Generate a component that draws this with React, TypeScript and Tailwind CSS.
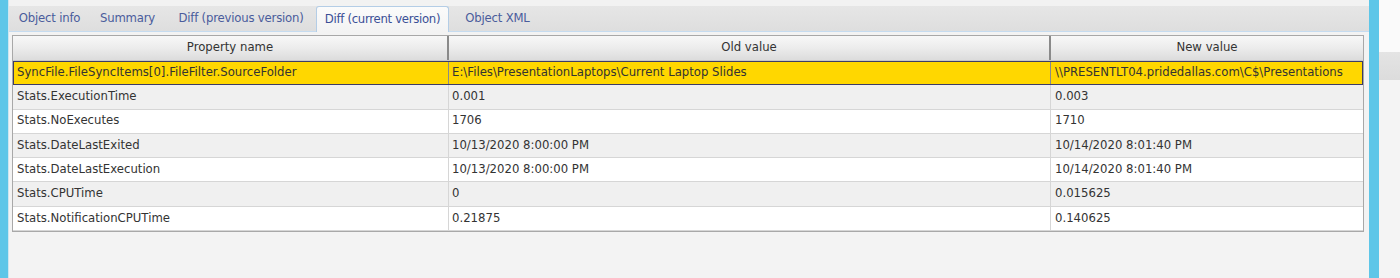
import React from "react";

type Row = {
  name: string;
  oldValue: string;
  newValue: string;
};

const rows: Row[] = [
  {
    name: "SyncFile.FileSyncItems[0].FileFilter.SourceFolder",
    oldValue: "E:\\Files\\PresentationLaptops\\Current Laptop Slides",
    newValue: "\\\\PRESENTLT04.pridedallas.com\\C$\\Presentations",
  },
  {name: "Stats.ExecutionTime", oldValue: "0.001", newValue: "0.003"},
  {name: "Stats.NoExecutes", oldValue: "1706", newValue: "1710"},
  {name: "Stats.DateLastExited", oldValue: "10/13/2020 8:00:00 PM", newValue: "10/14/2020 8:01:40 PM"},
  {name: "Stats.DateLastExecution", oldValue: "10/13/2020 8:00:00 PM", newValue: "10/14/2020 8:01:40 PM"},
  {name: "Stats.CPUTime", oldValue: "0", newValue: "0.015625"},
  {name: "Stats.NotificationCPUTime", oldValue: "0.21875", newValue: "0.140625"},
];

const tabs = [
  {label: "Object info", w: "w-[79px]"},
  {label: "Summary", w: "w-[77px]"},
  {label: "Diff (previous version)", w: "w-[150px]"},
  {label: "Diff (current version)", w: "w-[133px]", active: true},
  {label: "Object XML", w: "w-[97px]"},
];

export default function App() {
  return (
    <div className="flex h-[278px] w-[1400px] overflow-hidden bg-[#f3f3f3] font-['DejaVu_Sans',Verdana,sans-serif] text-[11.7px] text-[#333]">
      {/* left window edge */}
      <div className="w-[8px] shrink-0 bg-[#5ec6e8]" />
      <div className="w-[1px] shrink-0 bg-[#cfe6f0]" />

      <div className="flex w-[1360px] shrink-0 flex-col">
        <div className="h-[6px] bg-[#f2f2f2]" />
        {/* tab strip */}
        <div className="flex h-[25px] items-end bg-gradient-to-b from-[#e6e6e6] to-[#dedede] pl-[1px]">
          {tabs.map((t) =>
            t.active ? (
              <div
                key={t.label}
                className={`${t.w} relative -mb-[1px] flex h-[26px] items-center justify-center rounded-t-[3px] border border-b-0 border-[#b4cde6] bg-gradient-to-b from-[#fbfbfb] to-[#f3f3f3] tracking-[-0.3px] text-[#3b4f96]`}
              >
                {t.label}
              </div>
            ) : (
              <div key={t.label} className={`${t.w} flex h-[25px] items-center justify-center pt-[1px] tracking-[-0.2px] text-[#4a5c9c]`}>
                {t.label}
              </div>
            )
          )}
        </div>

        {/* panel */}
        <div className="flex-1 border-t border-[#c6dcf0] bg-[#f3f3f3] pl-[3px] pr-[5px] pt-[3px]">
          <div className="w-[1352px] border border-[#a8a8a8] bg-white">
            {/* header */}
            <div className="grid h-[25px] grid-cols-[436px_602px_1fr] border-b border-[#c8c8c8] bg-gradient-to-b from-[#f8f8f8] via-[#ececec] to-[#dcdcdc] text-[#333]">
              <div className="flex items-center justify-center border-r-2 border-[#8a8a8a]">Property name</div>
              <div className="flex items-center justify-center border-r-2 border-[#8a8a8a]">Old value</div>
              <div className="flex items-center justify-center">New value</div>
            </div>

            {rows.map((r, i) => {
              const selected = i === 0;
              const bg = selected
                ? "bg-[#ffd700] outline outline-1 -outline-offset-1 outline-[#3c3c66]"
                : i % 2 === 1
                  ? "bg-[#f0f0f0]"
                  : "bg-white";
              return (
                <div
                  key={r.name}
                  className={`grid h-[24.3px] grid-cols-[436px_602px_1fr] border-b border-[#d6d6d6] ${bg}`}
                >
                  <div className={`flex items-center pl-[4px] ${selected ? "border-r border-[#8a8a8a]" : "border-r border-[#d6d6d6]"}`}>
                    {r.name}
                  </div>
                  <div className={`flex items-center pl-[3px] ${selected ? "border-r border-[#8a8a8a]" : "border-r border-[#d6d6d6]"}`}>
                    {r.oldValue}
                  </div>
                  <div className="flex items-center pl-[4px]">{r.newValue}</div>
                </div>
              );
            })}
          </div>
        </div>
      </div>

      {/* right window edge */}
      <div className="w-[10px] shrink-0 bg-[#5ec6e8]" />
      <div className="flex flex-1 flex-col bg-[#f6f6f6]">
        <div className="h-[52px] bg-[#fafafa]" />
        <div className="h-[28px] bg-gradient-to-b from-[#e4e4e4] to-[#dcdcdc]" />
        <div className="flex-1 bg-[#f4f4f4]" />
      </div>
    </div>
  );
}
